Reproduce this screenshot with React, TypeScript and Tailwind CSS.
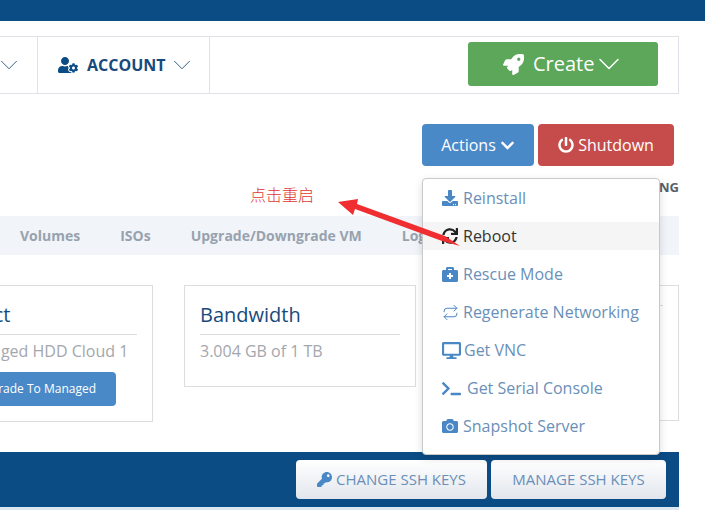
import React from "react";
import { ChevronDown, Repeat } from "lucide-react";
import { FaBriefcaseMedical, FaCamera, FaChevronDown, FaDesktop, FaDownload, FaKey, FaPowerOff, FaRocket, FaSync, FaTerminal, FaUserCog } from "react-icons/fa";

const RegenIcon = ({ className }: { className?: string }) => <Repeat size={17} strokeWidth={1.4} className={className} />;

const menuItems = [
  { label: "Reinstall", Icon: FaDownload },
  { label: "Reboot", Icon: FaSync, active: true },
  { label: "Rescue Mode", Icon: FaBriefcaseMedical },
  { label: "Regenerate Networking", Icon: RegenIcon },
  { label: "Get VNC", Icon: FaDesktop, wide: true },
  { label: "Get Serial Console", Icon: FaTerminal, wider: true },
  { label: "Snapshot Server", Icon: FaCamera },
];

const tabs = ["Volumes", "ISOs", "Upgrade/Downgrade VM", "Logs"];

const DropdownMenu = () => (
  <div className="absolute left-[422px] top-[178px] z-20 flex h-[277px] w-[238px] flex-col gap-[10px] rounded-[4px] border border-[#c9c9c9] bg-white pt-[5px] shadow-[0_3px_8px_rgba(0,0,0,0.14)]">
    {menuItems.map(({ label, Icon, active, wide, wider }) => (
      <div key={label} className={`flex h-[28px] items-center pl-[19px] text-[16px] ${active ? "bg-[#f5f5f5] text-[#333333]" : "text-[#6a8fb8]"}`}>
        <span className={`flex items-center ${wider ? "w-[25px]" : wide ? "w-[22px]" : "w-[21px]"}`}>
          <Icon className={`${wide || wider ? "text-[19px]" : "text-[16px]"} ${active ? "text-[#222222]" : "text-[#4a87c5]"}`} />
        </span>
        {label}
      </div>
    ))}
  </div>
);

const Card = ({ title, className, children }: { title: string; className: string; children?: React.ReactNode }) => (
  <div className={`shrink-0 border border-[#dddddd] bg-white px-[15px] pt-[14px] ${className}`}>
    <div className="border-b border-[#dddddd] pb-[5px] text-[20px] leading-[29px] text-[#174a7c]">{title}</div>
    {children}
  </div>
);

export default function App() {
  return (
    <div className="relative h-[513px] w-[705px] overflow-hidden bg-white font-['Open_Sans',sans-serif]">
      <div className="h-[21px] bg-[#0b4c85]" />

      <div className="mt-[15px] flex h-[58px] w-[679px] items-center border border-l-0 border-[#dfe3e8]">
        <div className="flex h-full w-[38px] items-center justify-end border-r border-[#dfe3e8] pr-[13px]">
          <ChevronDown size={30} strokeWidth={0.7} className="shrink-0 text-[#174a7c]" />
        </div>
        <div className="flex h-full w-[172px] items-center border-r border-[#dfe3e8] pl-[20px] text-[16px] font-bold text-[#174a7c]">
          <FaUserCog className="mr-[9px] text-[20px] text-[#0b4c85]" />
          ACCOUNT
          <ChevronDown size={30} strokeWidth={0.7} className="ml-[1px] shrink-0" />
        </div>
        <div className="mb-[2px] ml-[258px] flex h-[44px] w-[190px] items-center rounded-[3px] bg-[#5ca75a] pl-[35px] text-[20px] text-white">
          <FaRocket className="mr-[9px] text-[21px]" />
          Create
          <ChevronDown size={36} strokeWidth={1} className="ml-[-3px] shrink-0" />
        </div>
      </div>

      <div className="mt-[30px] flex w-[674px] justify-end gap-[4px] text-[16px] text-white">
        <div className="flex h-[42px] w-[112px] items-center justify-center rounded-[4px] bg-[#4a89c8]">
          Actions
          <FaChevronDown className="ml-[4px] text-[15px]" />
        </div>
        <div className="flex h-[42px] w-[136px] items-center justify-center rounded-[4px] bg-[#c64c4b]">
          <FaPowerOff className="mr-[4px] text-[16px]" />
          Shutdown
        </div>
      </div>

      <div className="mt-[12px] w-[679px] text-right text-[13px] font-bold leading-[18px] text-[#56606c]">NG</div>

      <div className="mt-[20px] flex h-[39px] w-[679px] items-center gap-[40px] bg-[#f1f4f8] pl-[20px] text-[14px] font-bold text-[#98a2af]">
        {tabs.map((tab) => (
          <span key={tab}>{tab}</span>
        ))}
      </div>

      <div className="mt-[30px] flex h-[136px] w-[679px] items-start gap-[31px]">
        <Card title="Product" className="ml-[-79px] h-[137px] w-[232px]">
          <div className="mt-[4px] whitespace-nowrap pr-[10px] text-right text-[16px] leading-[24px] text-[#a3a7ad]">Unmanaged HDD Cloud 1</div>
          <div className="ml-[-15px] mt-[9px] flex h-[34px] w-[194px] items-center justify-end rounded-[4px] bg-[#4a89c8] pr-[20px] text-[12px] font-medium text-white">
            Upgrade To Managed
          </div>
        </Card>
        <Card title="Bandwidth" className="h-[102px] w-[232px]">
          <div className="mt-[4px] text-[16px] leading-[24px] text-[#a3a7ad]">3.004 GB of 1 TB</div>
        </Card>
        <Card title="" className="h-[136px] w-[232px]" />
      </div>

      <div className="mt-[31px] flex h-[55px] w-[679px] items-center justify-end gap-[4px] bg-[#0b4c85] pr-[13px] text-[15px] text-[#6a8fb8]">
        <div className="flex h-[39px] w-[191px] items-center justify-center rounded-[4px] bg-gradient-to-b from-white to-[#e2e6ec]">
          <FaKey className="mr-[4px] text-[15px] text-[#4a87c5]" />
          CHANGE SSH KEYS
        </div>
        <div className="flex h-[39px] w-[175px] items-center justify-center rounded-[4px] bg-gradient-to-b from-white to-[#e2e6ec]">MANAGE SSH KEYS</div>
      </div>
      <div className="h-[3px] w-[679px] bg-[#dce7f2]" />

      <DropdownMenu />

      <span className="absolute left-[250px] top-[184px] z-30 font-['Noto_Sans_CJK_SC',sans-serif] text-[16px] font-light leading-[20px] text-[#e0352f]">点击重启</span>
      <svg className="absolute left-0 top-0 z-30" width="705" height="513">
        <polygon points="338,202 358,199 357,204 445,236 460,246 442,241 355,209 353,215" fill="#f02d30" />
      </svg>
    </div>
  );
}
